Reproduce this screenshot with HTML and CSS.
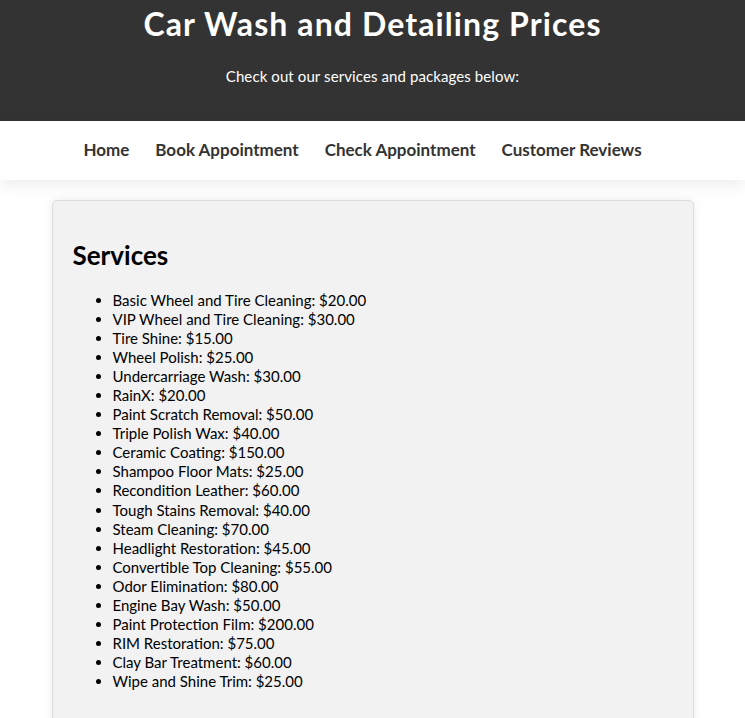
FILE: index.html
```html
<!DOCTYPE html>
<html lang="en">
<head>
<meta charset="utf-8">
<title>Car Wash and Detailing Prices</title>
<link rel="stylesheet" href="styles.css">
</head>
<body>
<header class="site-header">
  <h1 class="site-title">Car Wash and Detailing Prices</h1>
  <p class="site-tagline">Check out our services and packages below:</p>
</header>
<nav class="site-nav">
  <a href="#" class="nav-link">Home</a>
  <a href="#" class="nav-link">Book Appointment</a>
  <a href="#" class="nav-link">Check Appointment</a>
  <a href="#" class="nav-link">Customer Reviews</a>
</nav>
<main class="content">
  <section class="card">
    <h2 class="card-title">Services</h2>
    <ul class="price-list">
      <li>Basic Wheel and Tire Cleaning: $20.00</li>
      <li>VIP Wheel and Tire Cleaning: $30.00</li>
      <li>Tire Shine: $15.00</li>
      <li>Wheel Polish: $25.00</li>
      <li>Undercarriage Wash: $30.00</li>
      <li>RainX: $20.00</li>
      <li>Paint Scratch Removal: $50.00</li>
      <li>Triple Polish Wax: $40.00</li>
      <li>Ceramic Coating: $150.00</li>
      <li>Shampoo Floor Mats: $25.00</li>
      <li>Recondition Leather: $60.00</li>
      <li>Tough Stains Removal: $40.00</li>
      <li>Steam Cleaning: $70.00</li>
      <li>Headlight Restoration: $45.00</li>
      <li>Convertible Top Cleaning: $55.00</li>
      <li>Odor Elimination: $80.00</li>
      <li>Engine Bay Wash: $50.00</li>
      <li>Paint Protection Film: $200.00</li>
      <li>RIM Restoration: $75.00</li>
      <li>Clay Bar Treatment: $60.00</li>
      <li>Wipe and Shine Trim: $25.00</li>
    </ul>
  </section>
</main>
</body>
</html>
```
FILE: styles.css
```css
html, body {
  margin: 0;
  padding: 0;
}
body {
  font-family: Lato, "Open Sans", sans-serif;
  background: #ffffff;
  color: #000;
}
.site-header {
  background: #333333;
  color: #ffffff;
  text-align: center;
  height: 121px;
  padding-top: 5px;
  box-sizing: border-box;
}
.site-title {
  margin: 0;
  font-size: 32px;
  line-height: 38px;
  font-weight: 700;
  letter-spacing: 1.1px;
}
.site-tagline {
  margin: 24px 0 0;
  font-size: 15px;
  line-height: 18px;
  letter-spacing: 0.1px;
}
.site-nav {
  position: relative;
  background: #ffffff;
  height: 59px;
  display: flex;
  justify-content: center;
  align-items: center;
  gap: 26px;
  padding-right: 20px;
  box-shadow: 0 4px 16px rgba(0, 0, 0, 0.08);
}
.nav-link {
  color: #333333;
  text-decoration: none;
  font-weight: 700;
  font-size: 17px;
  margin-top: -2px;
}
.content {
  padding-top: 20px;
}
.card {
  max-width: 600px;
  margin: 0 auto;
  padding: 20px;
  background: #f2f2f2;
  border: 1px solid #dddddd;
  border-radius: 5px;
  box-shadow: 0 0 10px rgba(0, 0, 0, 0.08);
}
.card-title {
  margin: 19px 0 20px;
  font-size: 26px;
  line-height: 31px;
  font-weight: 700;
}
.price-list {
  margin: 0 0 16px;
  padding-left: 40px;
  font-size: 15px;
  line-height: 19.05px;
}
```
